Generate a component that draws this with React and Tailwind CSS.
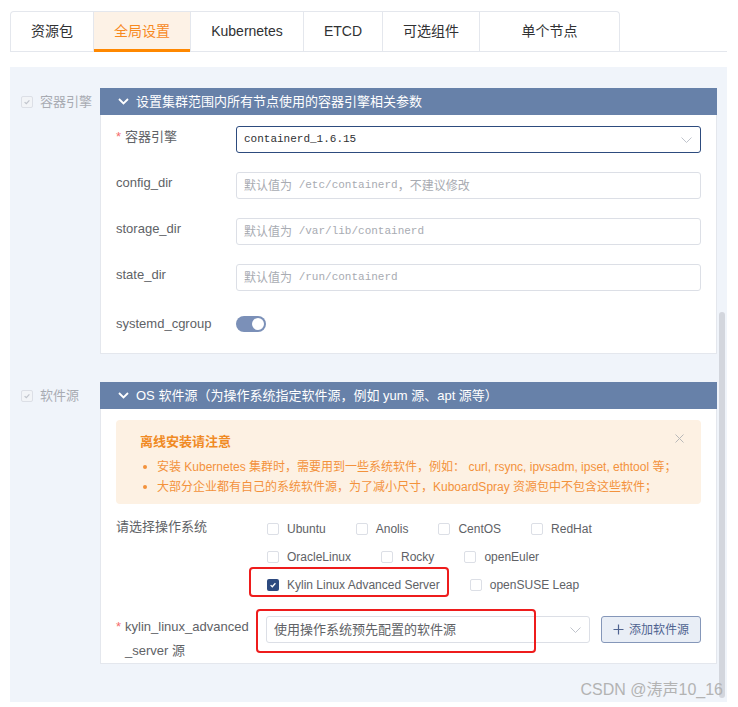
import React from 'react';

const tabs = [
  { label: '资源包', w: 'w-[82px]' },
  { label: '全局设置', w: 'w-[97px]', active: true },
  { label: 'Kubernetes', w: 'w-[113px]' },
  { label: 'ETCD', w: 'w-[79px]' },
  { label: '可选组件', w: 'w-[97px]' },
  { label: '单个节点', w: 'w-[140px]' },
];

const osRows = [
  ['Ubuntu', 'Anolis', 'CentOS', 'RedHat'],
  ['OracleLinux', 'Rocky', 'openEuler'],
  ['Kylin Linux Advanced Server', 'openSUSE Leap'],
];

const Chevron = ({ color = '#c0c4cc' }) => (
  <svg width="11" height="6" viewBox="0 0 11 6" fill="none">
    <path d="M0.5 0.5 L5.5 5.5 L10.5 0.5" stroke={color} strokeWidth="1" />
  </svg>
);

const Box = ({ checked }) =>
  checked ? (
    <span className="w-[12px] h-[12px] rounded-[2px] bg-[#2d4a7f] flex items-center justify-center shrink-0">
      <svg width="8" height="8" viewBox="0 0 8 8" fill="none">
        <path d="M1.6 4.1 L3.3 5.7 L6.4 2.3" stroke="#fff" strokeWidth="1.3" />
      </svg>
    </span>
  ) : (
    <span className="w-[12px] h-[12px] rounded-[2px] bg-white border border-[#dcdfe6] shrink-0" />
  );

// disabled + checked box next to the section names
const SideCheck = ({ label }) => (
  <div className="w-[90px] h-[27px] flex items-center pl-[11px] gap-[7px] shrink-0">
    <span className="w-[12px] h-[12px] rounded-[2px] bg-[#f2f4f7] border border-[#dcdfe6] flex items-center justify-center">
      <svg width="8" height="8" viewBox="0 0 8 8" fill="none">
        <path d="M1.6 4.1 L3.3 5.7 L6.4 2.3" stroke="#c0c4cc" strokeWidth="1.2" />
      </svg>
    </span>
    <span className="text-[13px] text-[#a8abb2]">{label}</span>
  </div>
);

const CardHeader = ({ children }) => (
  <div className="h-[27px] bg-[#6781a9] flex items-center pl-[18px] gap-[7px] text-white text-[13px]">
    <svg width="11" height="7" viewBox="0 0 11 7" fill="none">
      <path d="M1 1 L5.5 5.5 L10 1" stroke="#fff" strokeWidth="1.8" />
    </svg>
    <span>{children}</span>
  </div>
);

const Placeholder = ({ path, tail }) => (
  <div className="h-[27px] flex-1 rounded-[3px] border border-[#dcdfe6] bg-white flex items-center px-[7px] text-[#a8abb2]">
    <span className="text-[12px]">默认值为</span>
    <span className="font-['Liberation_Mono',monospace] text-[11px] whitespace-pre"> {path}</span>
    {tail && <span className="text-[12px]">{tail}</span>}
  </div>
);

const Label = ({ children, required }) => (
  <div className="w-[120px] shrink-0 text-[13px] leading-[22px] text-[#606266]">
    {required && <span className="text-[#f56c6c] mr-[4px]">*</span>}
    {children}
  </div>
);

export default function App() {
  return (
    <div className="relative w-[738px] h-[707px] bg-white overflow-hidden font-['Liberation_Sans','Noto_Sans_CJK_SC',sans-serif]">
      {/* tabs */}
      <div className="ml-[10px] mr-[11px] mt-[11px] flex border-b border-[#e4e7ed]">
        <div className="flex border border-b-0 border-[#e4e7ed] rounded-t-[4px]">
          {tabs.map((t, i) => (
            <div
              key={t.label}
              className={`relative h-[39px] flex items-center justify-center text-[14px] ${t.w} ${i > 0 ? 'border-l border-[#e4e7ed]' : ''} ${t.active ? 'bg-[#fdf2e6] text-[#f7891f]' : 'text-[#303133]'}`}
            >
              {t.label}
              {t.active && <span className="absolute left-0 right-0 bottom-[-1px] h-[3px] bg-[#ff8800]" />}
            </div>
          ))}
        </div>
      </div>

      {/* panel */}
      <div className="relative ml-[10px] mt-[15px] w-[717px] h-[635px] bg-[#f0f4fa] overflow-hidden pt-[21px]">
        <div className="flex flex-col gap-[28px]">
          {/* container engine */}
          <div className="flex">
            <SideCheck label="容器引擎" />
            <div className="w-[617px] flex flex-col">
              <CardHeader>设置集群范围内所有节点使用的容器引擎相关参数</CardHeader>
              <div className="bg-white border-x border-b border-[#e4e7ed] pt-[11px] pb-[16px] pl-[15px] pr-[15px] flex flex-col gap-[19px]">
                <div className="flex items-start">
                  <Label required>容器引擎</Label>
                  <div className="h-[27px] flex-1 rounded-[3px] border border-[#2d4b7e] bg-white flex items-center justify-between pl-[7px] pr-[8px]">
                    <span className="font-['Liberation_Mono',monospace] text-[11px] text-[#303133]">containerd_1.6.15</span>
                    <Chevron />
                  </div>
                </div>
                <div className="flex items-start">
                  <Label>config_dir</Label>
                  <Placeholder path="/etc/containerd" tail="，不建议修改" />
                </div>
                <div className="flex items-start">
                  <Label>storage_dir</Label>
                  <Placeholder path="/var/lib/containerd" />
                </div>
                <div className="flex items-start">
                  <Label>state_dir</Label>
                  <Placeholder path="/run/containerd" />
                </div>
                <div className="flex items-center h-[27px]">
                  <Label>systemd_cgroup</Label>
                  <div className="w-[30px] h-[16px] rounded-full bg-[#7b90b8] flex items-center justify-end pr-[2px]">
                    <span className="w-[12px] h-[12px] rounded-full bg-white" />
                  </div>
                </div>
              </div>
            </div>
          </div>

          {/* software source */}
          <div className="flex">
            <SideCheck label="软件源" />
            <div className="w-[617px] flex flex-col">
              <CardHeader>OS 软件源（为操作系统指定软件源，例如 yum 源、apt 源等）</CardHeader>
              <div className="bg-white border-x border-b border-[#e4e7ed] pt-[11px] pl-[15px] pr-[15px]">
                {/* alert */}
                <div className="relative rounded-[4px] bg-[#fdf1e3] pt-[12px] pb-[7px] pl-[24px]">
                  <div className="text-[13px] font-bold leading-[20px] text-[#f08a24]">离线安装请注意</div>
                  <div className="mt-[5px] text-[12px] leading-[20px] text-[#f3923c]">
                    <div className="flex items-center">
                      <span className="ml-[3px] w-[4px] h-[4px] rounded-full bg-[#f3923c]" />
                      <span className="ml-[10px]">安装 Kubernetes 集群时，需要用到一些系统软件，例如： curl, rsync, ipvsadm, ipset, ethtool 等；</span>
                    </div>
                    <div className="flex items-center">
                      <span className="ml-[3px] w-[4px] h-[4px] rounded-full bg-[#f3923c]" />
                      <span className="ml-[10px]">大部分企业都有自己的系统软件源，为了减小尺寸，KuboardSpray 资源包中不包含这些软件；</span>
                    </div>
                  </div>
                  <svg className="absolute right-[17px] top-[14px]" width="9" height="9" viewBox="0 0 9 9" fill="none">
                    <path d="M0.5 0.5 L8.5 8.5 M8.5 0.5 L0.5 8.5" stroke="#b9b9b9" strokeWidth="1" />
                  </svg>
                </div>

                {/* os choice */}
                <div className="mt-[11px] flex items-start">
                  <div className="w-[151px] shrink-0 text-[13px] leading-[24px] text-[#606266]">请选择操作系统</div>
                  <div className="flex flex-col">
                    {osRows.map((row, ri) => (
                      <div key={ri} className="h-[28px] flex items-center gap-[30px]">
                        {row.map((name) => {
                          const on = name.startsWith('Kylin');
                          return (
                            <div key={name} className="relative flex items-center gap-[8px] text-[12px] text-[#606266]">
                              <Box checked={on} />
                              <span>{name}</span>
                              {on && (
                                <span className="absolute left-[-18px] top-[-9px] w-[200px] h-[30px] rounded-[4px] border-2 border-[#ee1c1c]" />
                              )}
                            </div>
                          );
                        })}
                      </div>
                    ))}
                  </div>
                </div>

                {/* repo select */}
                <div className="mt-[17px] flex items-start">
                  <div className="w-[150px] shrink-0 mt-[-1px] text-[13px] leading-[24px] text-[#606266]">
                    <span className="text-[#f56c6c] mr-[4px]">*</span>
                    kylin_linux_advanced
                    <br />
                    <span className="ml-[9px]">_server 源</span>
                  </div>
                  <div className="relative h-[27px] w-[324px] rounded-[3px] border border-[#dcdfe6] bg-white flex items-center justify-between pl-[7px] pr-[8px]">
                    <span className="text-[13px] text-[#606266]">使用操作系统预先配置的软件源</span>
                    <Chevron />
                    <span className="absolute left-[-11px] top-[-8px] w-[280px] h-[44px] rounded-[4px] border-2 border-[#ee1c1c]" />
                  </div>
                  <button className="ml-[11px] h-[27px] w-[100px] rounded-[3px] border border-[#8597b9] bg-[#e9eef6] flex items-center justify-center gap-[5px] text-[12px] text-[#4f6390]">
                    <svg width="11" height="11" viewBox="0 0 11 11" fill="none">
                      <path d="M5.5 0.5 V10.5 M0.5 5.5 H10.5" stroke="#4f6390" strokeWidth="1.2" />
                    </svg>
                    添加软件源
                  </button>
                </div>
              </div>
            </div>
          </div>
        </div>

        {/* scrollbar thumb */}
        <span className="absolute left-[709px] top-[245px] bottom-[4px] w-[6px] rounded-full bg-[#d3d6dd]" />
      </div>

      <div className="absolute right-[15px] top-[680px] text-[16px] leading-[20px] text-[#b3b3b3]">CSDN @涛声10_16</div>
    </div>
  );
}
